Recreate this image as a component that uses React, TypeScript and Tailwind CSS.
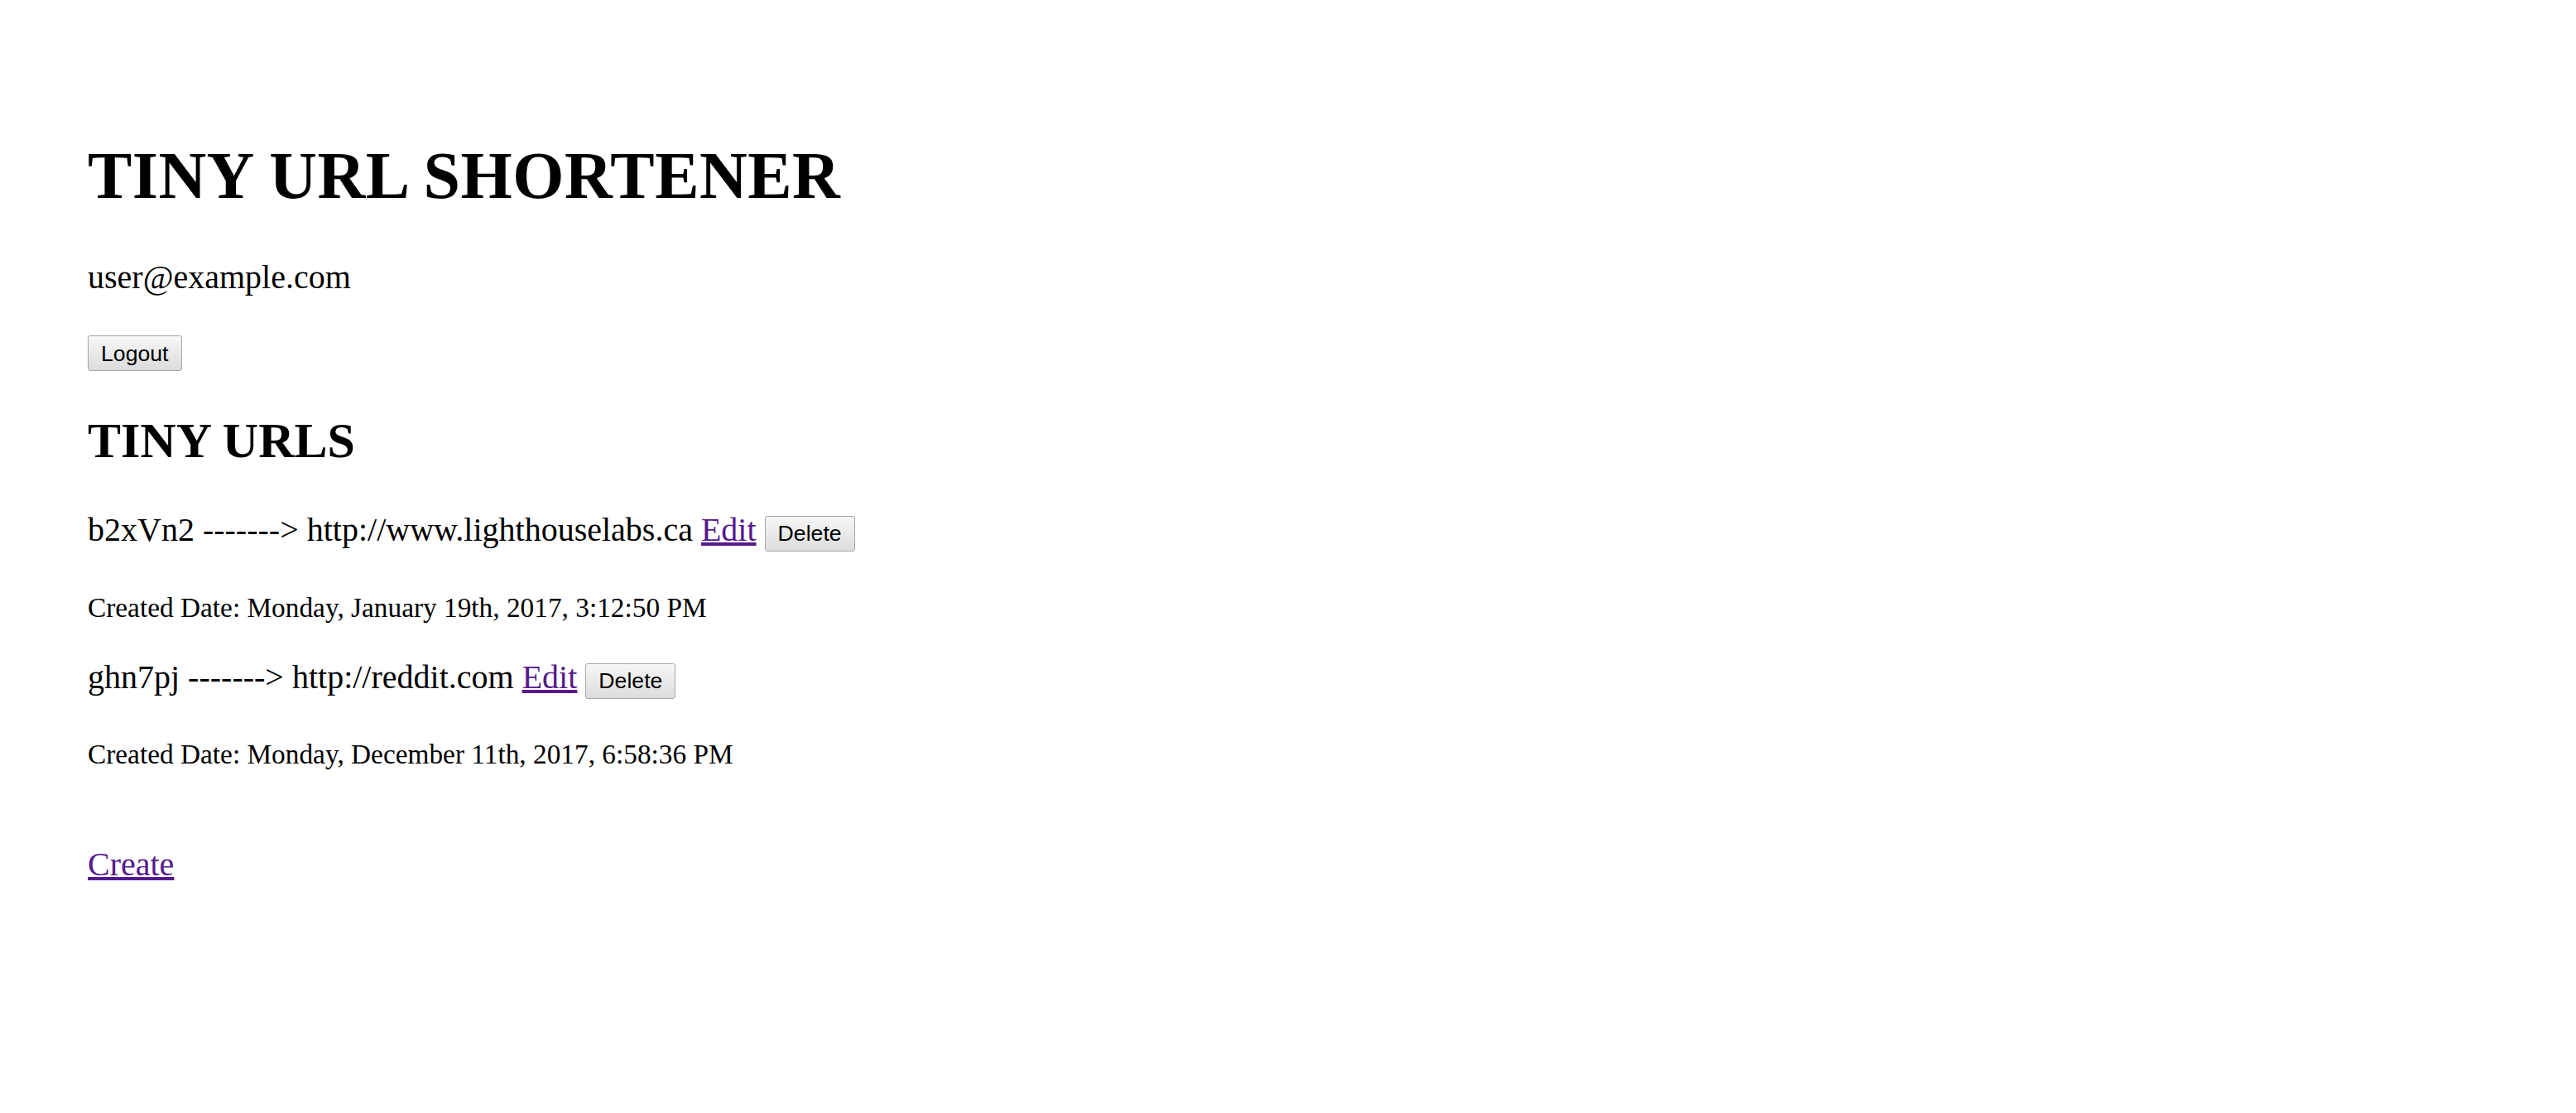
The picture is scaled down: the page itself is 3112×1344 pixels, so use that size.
import React from "react";

function Btn({ children }: { children: React.ReactNode }) {
  return (
    <button
      type="button"
      className="inline-block align-baseline font-['Liberation_Sans',Arial,sans-serif] text-[26.67px] leading-[30px] px-[15px] py-[5.5px] border border-[#a6a6a6] rounded-[3px] bg-linear-to-b from-[#f7f7f7] to-[#dcdcdc] text-black"
    >
      {children}
    </button>
  );
}

function LinkA({ children }: { children: React.ReactNode }) {
  return (
    <a
      href="#"
      className="text-[#551a8b] underline decoration-[4px] underline-offset-[2px]"
    >
      {children}
    </a>
  );
}

export default function App() {
  return (
    <div className="min-h-screen bg-white text-black pl-[106px] pt-[166px] font-['Liberation_Serif','Times_New_Roman',serif]">
      <h1 className="text-[80px] leading-[92px] font-bold tracking-[0.45px]">TINY URL SHORTENER</h1>
      <p className="mt-[53.5px] text-[40px] leading-[46px]">user@example.com</p>
      <div className="mt-[47.5px] flex">
        <Btn>Logout</Btn>
      </div>
      <h2 className="mt-[50px] text-[60px] leading-[69px] font-bold">TINY URLS</h2>

      <p className="mt-[50.25px] text-[40px] leading-[46px]">
        b2xVn2 -------&gt; http://www.lighthouselabs.ca <LinkA>Edit</LinkA> <Btn>Delete</Btn>
      </p>
      <p className="mt-[48.9px] text-[33.33px] leading-[38px]">
        Created Date: Monday, January 19th, 2017, 3:12:50 PM
      </p>

      <p className="mt-[42.75px] text-[40px] leading-[46px]">
        ghn7pj -------&gt; http://reddit.com <LinkA>Edit</LinkA> <Btn>Delete</Btn>
      </p>
      <p className="mt-[48px] text-[33.33px] leading-[38px]">
        Created Date: Monday, December 11th, 2017, 6:58:36 PM
      </p>

      <p className="mt-[90.75px] text-[40px] leading-[46px]">
        <LinkA>Create</LinkA>
      </p>
    </div>
  );
}
